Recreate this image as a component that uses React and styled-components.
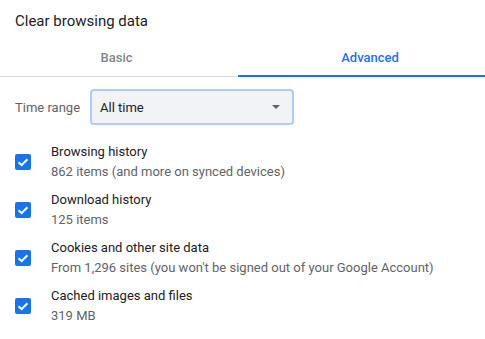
import React from 'react'
import styled, { createGlobalStyle } from 'styled-components'

const Global = createGlobalStyle`
  html, body {
    margin: 0;
    padding: 0;
    background: #fff;
  }
  body {
    font-family: Roboto, "Liberation Sans", Arial, sans-serif;
    color: #202124;
  }
`

const items = [
  { title: 'Browsing history', sub: '862 items (and more on synced devices)' },
  { title: 'Download history', sub: '125 items' },
  { title: 'Cookies and other site data', sub: "From 1,296 sites (you won't be signed out of your Google Account)" },
  { title: 'Cached images and files', sub: '319 MB' },
]

const App = () => {
  return (
    <Dialog>
      <Global />
      <Title>Clear browsing data</Title>
      <TabBar>
        <Tab>Basic</Tab>
        <Tab $active>Advanced</Tab>
      </TabBar>
      <RangeRow>
        <RangeLabel>Time range</RangeLabel>
        <Select>
          <SelectText>All time</SelectText>
          <Arrow viewBox="0 0 8 4">
            <path d="M0 0 L8 0 L4 4 Z" fill="#5f6368" />
          </Arrow>
        </Select>
      </RangeRow>
      <List>
        {items.map((it) => (
          <Row key={it.title}>
            <Check>
              <svg viewBox="0 0 16 16" width="16" height="16">
                <path d="M3.6 8.2 L6.6 11.1 L12.4 5.2" fill="none" stroke="#fff" strokeWidth="2" />
              </svg>
            </Check>
            <RowText>
              <RowTitle>{it.title}</RowTitle>
              <RowSub>{it.sub}</RowSub>
            </RowText>
          </Row>
        ))}
      </List>
    </Dialog>
  )
}

const Dialog = styled.div`
  width: 485px;
  height: 339px;
  display: flex;
  flex-direction: column;
  overflow: hidden;
`
const Title = styled.div`
  height: 40px;
  line-height: 42px;
  padding: 0 15px;
  font-size: 15px;
  color: #202124;
`
// the dialog runs past the right edge of the shot, so the second tab is wider
const TabBar = styled.div`
  display: grid;
  grid-template-columns: 233px 269px;
  width: 507px;
  box-shadow: inset 0 -1px 0 #dadce0;
`
const Tab = styled.div`
  height: 37px;
  box-sizing: border-box;
  display: flex;
  align-items: center;
  justify-content: center;
  font-size: 13px;
  font-weight: 500;
  color: ${(p) => (p.$active ? '#1a73e8' : '#80868b')};
  border-bottom: 2px solid ${(p) => (p.$active ? '#1a73e8' : 'transparent')};
  margin-left: ${(p) => (p.$active ? '5px' : '0')};
  padding-top: 1px;
  padding-bottom: 1px;
`
const RangeRow = styled.div`
  display: flex;
  align-items: center;
  padding: 12px 15px 0;
`
const RangeLabel = styled.div`
  font-size: 13px;
  color: #5f6368;
  width: 75px;
`
const Select = styled.div`
  width: 204px;
  height: 36px;
  box-sizing: border-box;
  border: 2px solid #aecbfa;
  border-radius: 4px;
  background: #f1f3f4;
  display: flex;
  align-items: center;
  justify-content: space-between;
  padding: 0 12px 0 8px;
`
const SelectText = styled.span`
  font-size: 13px;
  color: #202124;
`
const Arrow = styled.svg`
  width: 8px;
  height: 4px;
`
const List = styled.div`
  display: flex;
  flex-direction: column;
  padding-top: 13px;
`
const Row = styled.div`
  display: flex;
  align-items: center;
  height: 48px;
  padding: 0 15px;
  gap: 20px;
`
const Check = styled.div`
  width: 16px;
  height: 16px;
  border-radius: 2px;
  background: #1a73e8;
  display: flex;
  flex-shrink: 0;
`
const RowText = styled.div`
  display: flex;
  flex-direction: column;
`
const RowTitle = styled.div`
  font-size: 13px;
  line-height: 20px;
  color: #202124;
`
const RowSub = styled.div`
  font-size: 13px;
  line-height: 20px;
  color: #5f6368;
`

export default App
